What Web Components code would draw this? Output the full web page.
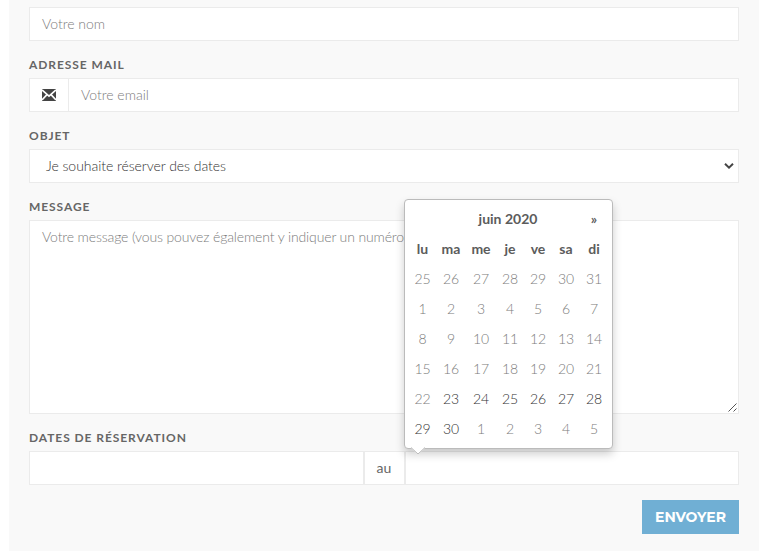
<!DOCTYPE html>
<html lang="fr">
<head>
<meta charset="utf-8">
<title>Réservation</title>
<style>
html,body{margin:0;height:551px;overflow:hidden;background:#fff}
body{font:300 14px/20px Lato,"Liberation Sans",sans-serif;color:#333}
</style>
</head>
<body>
<booking-form></booking-form>
<script>
const define = (name, html, setup) => customElements.define(name, class extends HTMLElement {
  constructor() {
    super();
    const t = document.createElement('template');
    t.innerHTML = html;
    this.attachShadow({ mode: 'open' }).append(t.content.cloneNode(true));
    if (setup) setup(this.shadowRoot);
  }
});

define('form-field', `
<style>
:host{display:block;margin-bottom:15px}
.label{display:block;height:17px;margin-bottom:5px;font:700 12px/17px Lato,sans-serif;letter-spacing:.93px;color:#666;text-transform:uppercase}
.row{display:flex}
</style>
<span class="label"><slot name="label"></slot></span><div class="row"><slot></slot></div>`);

define('input-box', `
<style>
:host{display:flex;box-sizing:border-box;flex:1;height:34px;padding:6px 12px;border:1px solid #ebebeb;background:#fff;color:#7c7c7c;white-space:nowrap}
:host([kind=select]){color:#333;padding:6px 4px 6px 16px;justify-content:space-between;align-items:center;letter-spacing:-.05px}
:host([kind=area]){position:relative;height:194px;letter-spacing:-.13px}
:host([kind=addon]){flex:none;width:40px;margin-right:-1px;padding:0;align-items:center;justify-content:center;color:#555}
:host([kind=word]){flex:none;width:41px;padding:0;align-items:center;justify-content:center;color:#666;font-weight:400}
</style><slot></slot>`);

define('mail-icon', `
<style>:host{display:block;width:14px;height:12px}svg{display:block}</style>
<svg width="14" height="12" viewBox="0 0 14 12"><path d="M0 0h14v12H0z" fill="#444"/><path d="M0 .9 7 7.2 14 .9M0 10.9 5 5.6M14 10.9 9 5.6" fill="none" stroke="#fff" stroke-width="1.6"/></svg>`);

define('chevron-icon', `
<style>:host{display:block}svg{display:block}</style>
<svg width="10" height="6" viewBox="0 0 10 6" fill="none" stroke="#444" stroke-width="2"><path d="M1 .8 5 4.6 9 .8"/></svg>`);

define('resize-grip', `
<style>:host{position:absolute;right:1px;bottom:1px}svg{display:block}</style>
<svg width="9" height="9" viewBox="0 0 9 9" stroke="#555" stroke-width="1"><path d="M.5 8.5l8-8M5.5 8.5l3-3"/></svg>`);

define('date-picker', `
<style>
:host{position:absolute;left:404px;top:199px;box-sizing:border-box;width:209px;height:250px;padding:4px;border:1px solid #bbb;border-radius:4px;background:#fff;box-shadow:0 5px 10px rgba(0,0,0,.2)}
.grid{display:grid;grid-template-columns:27px 30px 30px 28px 28px 28px 28px;grid-auto-rows:30px;line-height:30px;text-align:center}
b{font-weight:700;color:#5c5c5c}
.title{grid-column:2/7}
.off{color:#7c7c7c}
.tip{position:absolute;left:6px;bottom:-7px;display:block}
</style>
<div class="grid"><span></span><b class="title">juin 2020</b><b>»</b></div>
<svg class="tip" width="14" height="8" viewBox="0 0 14 8"><path d="M0 0 0 1 7 7.4 14 1V0z" fill="#fff"/><path d="M0 .5 7 7 14 .5" fill="none" stroke="#bbb"/></svg>`,
root => {
  const grid = root.querySelector('.grid');
  const cell = (tag, text, cls) => {
    const e = document.createElement(tag);
    e.textContent = text;
    if (cls) e.className = cls;
    grid.append(e);
  };
  ['lu', 'ma', 'me', 'je', 've', 'sa', 'di'].forEach(d => cell('b', d));
  for (let d = 25; d <= 31; d++) cell('span', d, 'off');
  for (let d = 1; d <= 30; d++) cell('span', d, d < 23 ? 'off' : '');
  for (let d = 1; d <= 5; d++) cell('span', d, 'off');
});

define('submit-button', `
<style>
:host{display:flex;align-items:center;justify-content:center;width:97px;height:34px;margin-left:auto;background:#70afd4;color:#fff;font:700 14px/20px Montserrat,Inter,sans-serif}
</style><slot></slot>`);

define('booking-form', `
<style>
:host{display:block;position:relative;height:551px}
.panel{box-sizing:border-box;height:551px;margin:0 9.5px 0 9px;padding:7px 19.5px 0 20px;background:#f9f9f9}
.first{display:flex;margin-bottom:15px}
</style>
<div class="panel">
<div class="first"><input-box>Votre nom</input-box></div>
<form-field><span slot="label">Adresse mail</span><input-box kind="addon"><mail-icon></mail-icon></input-box><input-box>Votre email</input-box></form-field>
<form-field><span slot="label">Objet</span><input-box kind="select"><span>Je souhaite réserver des dates</span><chevron-icon></chevron-icon></input-box></form-field>
<form-field><span slot="label">Message</span><input-box kind="area"><span>Votre message (vous pouvez également y indiquer un numéro</span><resize-grip></resize-grip></input-box></form-field>
<form-field><span slot="label">Dates de réservation</span><input-box></input-box><input-box kind="word">au</input-box><input-box></input-box></form-field>
<submit-button>ENVOYER</submit-button>
</div>
<date-picker></date-picker>`);
</script>
</body>
</html>
